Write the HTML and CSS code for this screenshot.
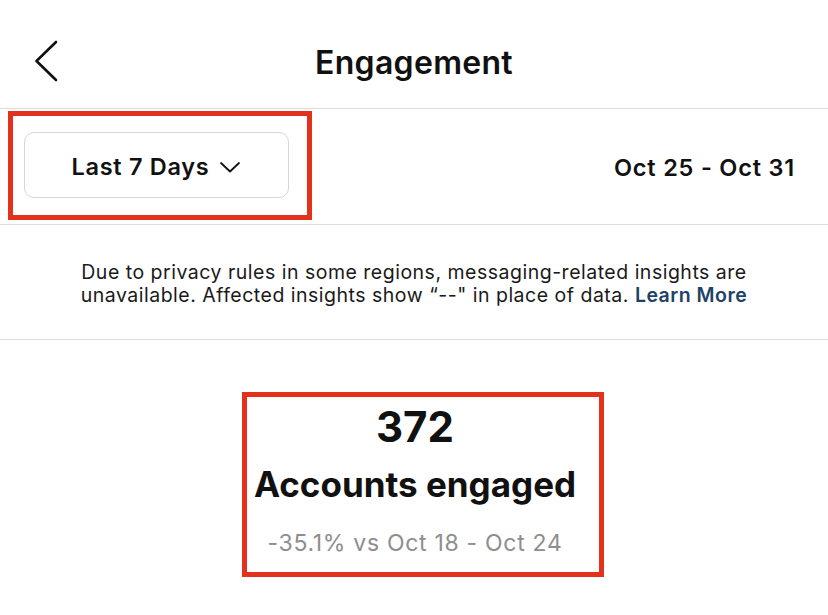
FILE: index.html
```html
<!DOCTYPE html>
<html>
<head>
<meta charset="utf-8">
<link rel="stylesheet" href="styles.css">
</head>
<body>
<div class="page">
  <header class="topbar">
    <button class="back" aria-label="Back">
      <svg width="26" height="44" viewBox="0 0 26 44"><path d="M23 3 L3.5 22 L23 41" fill="none" stroke="#111" stroke-width="2.6" stroke-linecap="round" stroke-linejoin="round"/></svg>
    </button>
    <h1 class="title">Engagement</h1>
  </header>
  <section class="filter-row">
    <div class="highlight highlight-filter">
      <div class="range-btn">
        <span>Last 7 Days</span>
        <svg class="caret" width="22" height="12" viewBox="0 0 22 12"><path d="M2 2 L11 10.5 L20 2" fill="none" stroke="#111" stroke-width="1.8" stroke-linecap="round" stroke-linejoin="round"/></svg>
      </div>
    </div>
    <div class="date-range">Oct 25 - Oct 31</div>
  </section>
  <section class="notice">
    <p>Due to privacy rules in some regions, messaging-related insights are<br>unavailable. Affected insights show “--" in place of data. <a class="learn">Learn More</a></p>
  </section>
  <section class="metric-wrap">
    <div class="highlight highlight-metric">
      <div class="metric-value">372</div>
      <div class="metric-label">Accounts engaged</div>
      <div class="metric-compare">-35.1% vs Oct 18 - Oct 24</div>
    </div>
  </section>
</div>
</body>
</html>
```
FILE: styles.css
```css
* { box-sizing: border-box; }
html, body { margin: 0; padding: 0; background: #fff; }
body {
  font-family: "Inter", "Roboto", "Liberation Sans", sans-serif;
  color: #111;
  width: 828px;
  height: 615px;
  overflow: hidden;
}
.page { width: 828px; }

.topbar {
  position: relative;
  height: 109px;
  border-bottom: 1px solid #dcdcdc;
  display: flex;
  align-items: flex-start;
  justify-content: center;
  padding-top: 47px;
}
.back {
  position: absolute;
  left: 33px;
  top: 39px;
  padding: 0;
  border: 0;
  background: none;
  display: flex;
}
.title {
  margin: 0;
  font-size: 32px;
  font-weight: 600;
  letter-spacing: 0.3px;
  line-height: 1;
}

.filter-row {
  height: 116px;
  border-bottom: 1px solid #dcdcdc;
  display: flex;
  align-items: flex-start;
  justify-content: space-between;
  padding: 2px 33px 0 8px;
}
.highlight {
  border: 5px solid #e2321c;
}
.highlight-filter {
  width: 304px;
  height: 109px;
  padding: 16px 18px 0 11px;
}
.range-btn {
  width: 265px;
  height: 66px;
  border: 1.5px solid #d6d6d6;
  border-radius: 10px;
  display: flex;
  align-items: center;
  justify-content: center;
  gap: 10px;
  font-size: 23.5px;
  font-weight: 600;
  letter-spacing: 0.7px;
  padding-top: 2px;
}
.caret { margin-top: 1px; }
.date-range {
  margin-top: 42px;
  font-size: 23.5px;
  font-weight: 600;
  letter-spacing: 0.8px;
}

.notice {
  height: 115px;
  border-bottom: 1px solid #dcdcdc;
  display: flex;
  align-items: center;
  justify-content: center;
  padding-top: 4px;
}
.notice p {
  margin: 0;
  text-align: center;
  font-size: 19.5px;
  line-height: 23px;
  color: #1a1a1a;
  letter-spacing: 0.5px;
}
.learn {
  color: #1e4166;
  font-weight: 600;
}

.metric-wrap {
  display: flex;
  justify-content: center;
  padding-top: 52px;
  padding-left: 18px;
}
.highlight-metric {
  width: 362px;
  height: 185px;
  display: flex;
  flex-direction: column;
  align-items: center;
  padding-right: 16px;
}
.metric-value {
  font-size: 42px;
  font-weight: 700;
  line-height: 1;
  margin-top: 9px;
}
.metric-label {
  font-size: 35px;
  font-weight: 700;
  line-height: 1;
  margin-top: 19px;
  letter-spacing: 0;
  white-space: nowrap;
}
.metric-compare {
  font-size: 23px;
  font-weight: 400;
  color: #8e8e8e;
  line-height: 1;
  margin-top: 30px;
  letter-spacing: 0.7px;
}
```
